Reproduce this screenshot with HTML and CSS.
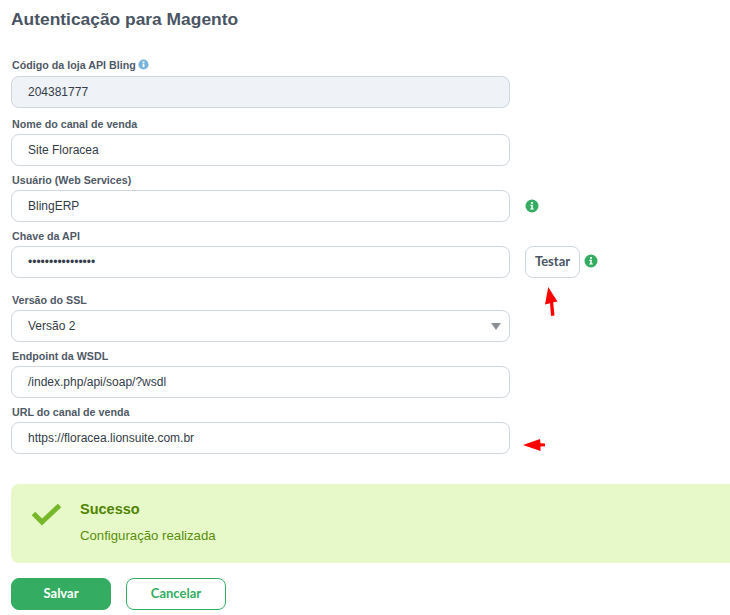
FILE: index.html
```html
<!DOCTYPE html>
<html lang="pt-BR">
<head>
    <meta charset="UTF-8">
    <meta name="viewport" content="width=device-width, initial-scale=1.0">
    <title>Autenticação para Magento</title>
    <link rel="stylesheet" href="styles.css">
</head>
<body>

    <div class="container">
        <h2>Autenticação para Magento</h2>

        <form class="config-form">
            <div class="field field-first">
                <label for="codigo">Código da loja API Bling
                    <svg class="info info-blue" viewBox="0 0 12 12"><circle cx="6" cy="6" r="5.5"/><rect x="5" y="5" width="2" height="4" fill="#fff"/><rect x="5" y="2.6" width="2" height="1.6" fill="#fff"/></svg>
                </label>
                <input type="text" id="codigo" class="input input-disabled" value="204381777" readonly>
            </div>

            <div class="field">
                <label for="nome">Nome do canal de venda</label>
                <input type="text" id="nome" class="input" value="Site Floracea">
            </div>

            <div class="field">
                <label for="usuario">Usuário (Web Services)</label>
                <div class="field-row">
                    <input type="text" id="usuario" class="input" value="BlingERP">
                    <svg class="info info-green row-info" viewBox="0 0 14 14"><circle cx="7" cy="7" r="6.5"/><path d="M5.4 5.8h2.4v3.6h1v1.1H5.3V9.4h1V6.9h-.9z" fill="#fff"/><rect x="6.1" y="3" width="1.8" height="1.8" fill="#fff"/></svg>
                </div>
            </div>

            <div class="field field-test">
                <label for="chave">Chave da API</label>
                <div class="field-row">
                    <input type="password" id="chave" class="input" value="abcdefghijklmnop">
                    <button type="button" class="btn btn-test">Testar</button>
                    <svg class="info info-green test-info" viewBox="0 0 14 14"><circle cx="7" cy="7" r="6.5"/><path d="M5.4 5.8h2.4v3.6h1v1.1H5.3V9.4h1V6.9h-.9z" fill="#fff"/><rect x="6.1" y="3" width="1.8" height="1.8" fill="#fff"/></svg>
                    <svg class="arrow arrow-up" viewBox="0 0 13 29"><path d="M3.200 0 12.500 14.500 8.200 15.300 9.500 28.500 6 29 5 16.300 0 17.500z" fill="#ff0000"/></svg>
                </div>
            </div>

            <div class="field">
                <label for="ssl">Versão do SSL</label>
                <div class="select-wrap">
                    <select id="ssl" class="input">
                        <option>Versão 2</option>
                    </select>
                    <span class="caret"></span>
                </div>
            </div>

            <div class="field">
                <label for="endpoint">Endpoint da WSDL</label>
                <input type="text" id="endpoint" class="input" value="/index.php/api/soap/?wsdl">
            </div>

            <div class="field">
                <label for="url">URL do canal de venda</label>
                <div class="field-row">
                    <input type="text" id="url" class="input" value="https://floracea.lionsuite.com.br">
                    <svg class="arrow arrow-left" viewBox="0 0 22 14"><path d="M0 7 17 1 17.500 5.300 22 5.600 22 8.200 17.500 8.500 17.500 13z" fill="#ff0000"/></svg>
                </div>
            </div>
        </form>

        <div class="alert">
            <svg class="alert-check" viewBox="0 0 32 26"><path d="M3.500 12.500 12 21 29.500 4.500" fill="none" stroke="#76b82a" stroke-width="5" stroke-linejoin="miter"/></svg>
            <div>
                <h3>Sucesso</h3>
                <p>Configuração realizada</p>
            </div>
        </div>

        <div class="actions">
            <button type="button" class="btn btn-save">Salvar</button>
            <button type="button" class="btn btn-cancel">Cancelar</button>
        </div>
    </div>

</body>
</html>
```

FILE: styles.css
```css
* {
    box-sizing: border-box;
}

html, body {
    overflow: hidden;
}

body {
    margin: 0;
    font-family: "Liberation Sans", Arial, sans-serif;
    background-color: #fff;
    color: #3e4a5a;
}

.container {
    padding: 10px 0 0 11px;
}

h2 {
    margin: 0;
    font-size: 17.400px;
    line-height: 19px;
    font-weight: bold;
    color: #4a5564;
}

.field {
    margin-top: 8px;
}

.field-first {
    margin-top: 30px;
}

.field-first + .field {
    margin-top: 10px;
}

.field-test + .field {
    margin-top: 16px;
}

label {
    display: block;
    height: 13px;
    margin-bottom: 3px;
    padding-left: 1px;
    font-size: 10.700px;
    line-height: 12px;
    font-weight: bold;
    color: #4f5966;
}

.field-first label {
    margin-bottom: -2px;
    height: 19px;
}

.input {
    display: block;
    width: 499px;
    height: 32px;
    padding: 0 16px;
    border: 1px solid #ced6e0;
    border-radius: 8px;
    background: #fff;
    font-family: "Liberation Sans", Arial, sans-serif;
    font-size: 12px;
    color: #333c48;
    outline: none;
}

.input-disabled {
    background: #eff2f7;
}

select.input {
    appearance: none;
}

.select-wrap {
    position: relative;
    width: 499px;
}

.caret {
    position: absolute;
    right: 9px;
    top: 13px;
    border-left: 5.5px solid transparent;
    border-right: 5.5px solid transparent;
    border-top: 7px solid #8a8f96;
}

.field-row {
    position: relative;
    display: flex;
    align-items: center;
}

.info {
    flex: none;
}

.info-blue {
    width: 11px;
    height: 11px;
    margin-left: -1px;
    vertical-align: -1px;
    fill: #77b2dc;
}

.info-green {
    width: 14px;
    height: 14px;
    fill: #34ad62;
}

.row-info {
    margin-left: 15px;
}

.test-info {
    margin: -3px 0 0 4px;
}

.btn {
    height: 32px;
    padding: 0 0 2px;
    border-radius: 8px;
    font-family: Lato, "Liberation Sans", sans-serif;
    font-size: 13px;
    font-weight: bold;
    cursor: pointer;
}

.btn-test {
    width: 55px;
    margin-left: 15px;
    border: 1px solid #ced6e0;
    background: #fff;
    color: #4a5564;
}

.arrow {
    position: absolute;
}

.arrow-up {
    left: 534px;
    top: 41px;
    width: 13px;
    height: 29px;
}

.arrow-left {
    left: 512px;
    top: 16px;
    width: 22px;
    height: 14px;
}

.alert {
    display: flex;
    gap: 18px;
    height: 79px;
    margin-top: 30px;
    padding: 16px 0 0 19px;
    border-radius: 8px 0 0 8px;
    background: #e8f9c9;
}

.alert-check {
    flex: none;
    width: 32px;
    height: 26px;
    margin-top: 1px;
}

.alert h3 {
    margin: 0;
    font-size: 14.500px;
    line-height: 18px;
    font-weight: bold;
    color: #4f8400;
}

.alert p {
    margin: 10px 0 0;
    font-size: 13.200px;
    line-height: 16px;
    color: #5a8f0c;
}

.actions {
    display: flex;
    gap: 15px;
    margin-top: 15px;
}

.btn-save, .btn-cancel {
    width: 100px;
}

.btn-save {
    border: 1px solid #34ad62;
    background: #34ad62;
    color: #fff;
}

.btn-cancel {
    border: 1px solid #34ad62;
    background: #fff;
    color: #34ad62;
}
```
